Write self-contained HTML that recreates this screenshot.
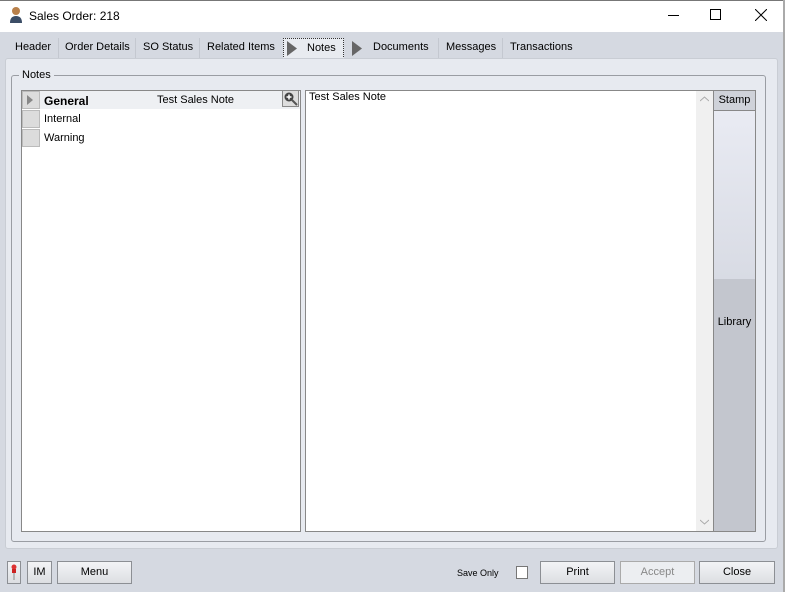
<!DOCTYPE html><html><head><style>
body{margin:0;width:785px;height:592px;position:relative;overflow:hidden;background:#d5d9e1;font-family:"Liberation Sans",sans-serif;font-size:11px;color:#000}
div{position:absolute;box-sizing:border-box}
.t{top:41px;font-size:11px}
.sep{top:38px;width:1px;height:20px;background:#c4c8d0}
.btn{top:561px;height:23px;border:1px solid #8c8f94;background:linear-gradient(#f3f4f6,#dcdee2);text-align:center;line-height:21px;font-size:11px}
</style></head><body>
<div style="left:0;top:0;width:785px;height:32px;background:#fff"></div>
<div style="left:0;top:0;width:785px;height:1px;background:#777"></div>
<div style="left:783px;top:0;width:2px;height:592px;background:#aaa"></div>
<svg style="position:absolute;left:9px;top:6px" width="14" height="18"><circle cx="7" cy="5" r="4" fill="#b8804a"/><path d="M1 17 Q1 10 7 10 Q13 10 13 17Z" fill="#3b4d66"/></svg>
<div style="left:29px;top:9px;font-size:12px">Sales Order: 218</div>
<div style="left:668px;top:15px;width:11px;height:1px;background:#000"></div>
<div style="left:710px;top:9px;width:11px;height:11px;border:1px solid #000"></div>
<svg style="position:absolute;left:755px;top:9px" width="12" height="12"><path d="M0 0L12 12M12 0L0 12" stroke="#000"/></svg>
<div class="t" style="left:15px">Header</div><div class="sep" style="left:58px"></div>
<div class="t" style="left:65px">Order Details</div><div class="sep" style="left:135px"></div>
<div class="t" style="left:143px">SO Status</div><div class="sep" style="left:199px"></div>
<div class="t" style="left:207px">Related Items</div>
<div style="left:283px;top:38px;width:61px;height:21px;border:1px dotted #333;background:#e8ebf0"></div>
<svg style="position:absolute;left:287px;top:41px" width="10" height="15"><path d="M0 0L10 7.5L0 15Z" fill="#666"/></svg>
<div class="t" style="left:307px;top:42px">Notes</div>
<svg style="position:absolute;left:352px;top:41px" width="10" height="15"><path d="M0 0L10 7.5L0 15Z" fill="#666"/></svg>
<div class="t" style="left:373px">Documents</div><div class="sep" style="left:438px"></div>
<div class="t" style="left:446px">Messages</div><div class="sep" style="left:502px"></div>
<div class="t" style="left:510px">Transactions</div>
<div style="left:5px;top:58px;width:773px;height:491px;background:#e7eaf0;border:1px solid #c9cdd4;border-radius:3px"></div>
<div style="left:11px;top:75px;width:755px;height:467px;border:1px solid #9a9da3;border-radius:3px"></div>
<div style="left:19px;top:69px;background:#e7eaf0;padding:0 3px">Notes</div>
<div style="left:21px;top:90px;width:280px;height:442px;background:#fff;border:1px solid #888"></div>
<div style="left:22px;top:91px;width:278px;height:18px;background:#eef0f3"></div>
<div style="left:22px;top:91px;width:18px;height:18px;background:#dcdcdc;border:1px solid #bbb"></div>
<svg style="position:absolute;left:27px;top:95px" width="6" height="10"><path d="M0 0L6 5L0 10Z" fill="#888"/></svg>
<div style="left:22px;top:110px;width:18px;height:18px;background:#dcdcdc;border:1px solid #bbb"></div>
<div style="left:22px;top:129px;width:18px;height:18px;background:#dcdcdc;border:1px solid #bbb"></div>
<div style="left:44px;top:94px;font-weight:bold;font-size:12px">General</div>
<div style="left:157px;top:94px">Test Sales Note</div>
<div style="left:44px;top:113px">Internal</div>
<div style="left:44px;top:132px">Warning</div>
<div style="left:282px;top:90px;width:17px;height:17px;border:1px solid #888;background:#ddd"></div>
<svg style="position:absolute;left:283px;top:91px" width="16" height="16"><circle cx="6" cy="6" r="4.5" fill="#444"/><path d="M6 3.5V8.5M3.5 6H8.5" stroke="#fff" stroke-width="1.5"/><path d="M9 9L14 14" stroke="#555" stroke-width="2"/></svg>
<div style="left:305px;top:90px;width:409px;height:442px;background:#fff;border:1px solid #888"></div>
<div style="left:696px;top:91px;width:17px;height:440px;background:#f0f0f0"></div>
<svg style="position:absolute;left:700px;top:96px" width="9" height="6"><path d="M0 5L4.5 1L9 5" stroke="#aaa" fill="none"/></svg>
<svg style="position:absolute;left:700px;top:519px" width="9" height="6"><path d="M0 1L4.5 5L9 1" stroke="#aaa" fill="none"/></svg>
<div style="left:309px;top:91px">Test Sales Note</div>
<div style="left:713px;top:90px;width:43px;height:442px;border:1px solid #888;background:#c3c6ce"></div>
<div style="left:714px;top:110px;width:41px;height:169px;background:linear-gradient(#e9ebf3,#d8dbe4)"></div>
<div style="left:714px;top:91px;width:41px;height:20px;background:#cfd2d9;border-bottom:1px solid #888;text-align:center;line-height:19px">Stamp</div>
<div style="left:714px;top:316px;width:41px;text-align:center">Library</div>
<div class="btn" style="left:7px;width:14px"></div>
<svg style="position:absolute;left:10px;top:564px" width="8" height="17"><circle cx="4" cy="3" r="2.5" fill="#d33"/><rect x="2" y="5" width="4" height="4" fill="#c22"/><path d="M4 9V16" stroke="#888"/></svg>
<div class="btn" style="left:27px;width:25px">IM</div>
<div class="btn" style="left:57px;width:75px">Menu</div>
<div style="left:457px;top:568px;font-size:9px">Save Only</div>
<div style="left:516px;top:566px;width:12px;height:13px;border:1px solid #777;background:#fff"></div>
<div class="btn" style="left:540px;width:75px">Print</div>
<div class="btn" style="left:620px;width:75px;color:#888;background:#eceef1;border-color:#aaa">Accept</div>
<div class="btn" style="left:699px;width:76px">Close</div>
</body></html>
